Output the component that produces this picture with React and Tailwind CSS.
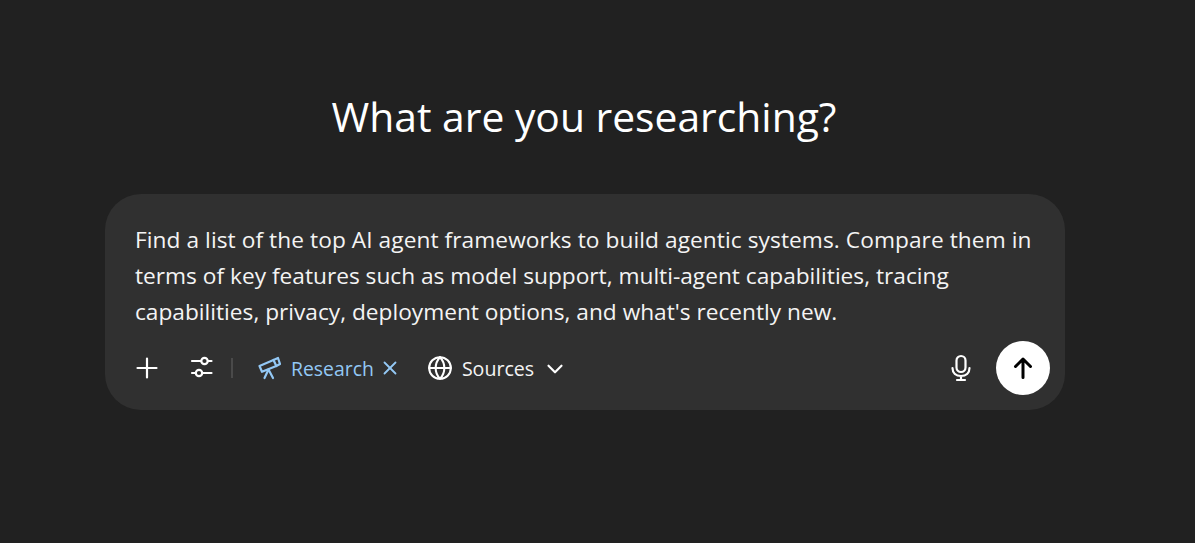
import React from "react";
import { X, Globe, ChevronDown } from "lucide-react";

function PlusIcon() {
  return (
    <svg width="24" height="24" viewBox="0 0 24 24" fill="none" stroke="currentColor" strokeWidth="2.2" strokeLinecap="round">
      <path d="M12 2.5v19M2.5 12h19" />
    </svg>
  );
}

function SlidersIcon() {
  return (
    <svg width="24" height="24" viewBox="0 0 24 24" fill="none" stroke="currentColor" strokeWidth="2.2" strokeLinecap="round" className="ml-[31px]">
      <path d="M2 5h9M18 5h3.5M2 17h3.5M12.5 17h9" />
      <circle cx="14.5" cy="5" r="3.2" />
      <circle cx="9" cy="17" r="3.2" />
    </svg>
  );
}

function TelescopeIcon() {
  return (
    <svg width="24" height="24" viewBox="0 0 24 24" fill="none" stroke="currentColor" strokeWidth="2.2" strokeLinecap="round" strokeLinejoin="round" className="ml-[24px]">
      <path d="M2.5 10L16.5 4l2.8 6L5 15.8z" />
      <path d="M16.5 4L21 2l2 6-3.7 2" />
      <path d="M11.5 13.5l-4 8.5M11.5 13.5l4.5 8.5" />
    </svg>
  );
}

function MicIcon() {
  return (
    <svg width="24" height="28" viewBox="0 0 24 28" fill="none" stroke="currentColor" strokeWidth="2.2" strokeLinecap="round">
      <rect x="7.5" y="2" width="9" height="16" rx="4.5" />
      <path d="M3.5 14c0 5 3.5 8 8.5 8s8.5-3 8.5-8M12 22v4M8 26h8" />
    </svg>
  );
}

function ArrowIcon() {
  return (
    <svg width="24" height="24" viewBox="0 0 24 24" fill="none" stroke="currentColor" strokeWidth="3" strokeLinecap="round" strokeLinejoin="round">
      <path d="M12 21.5V3M4.5 10.5L12 3l7.5 7.5" />
    </svg>
  );
}

export default function App() {
  return (
    <main className="min-h-[543px] bg-[#212121] text-white font-['Open_Sans','Noto_Sans',sans-serif] flex flex-col items-center pt-[89px] pr-[25px] overflow-hidden">
      <h1 className="text-[40.8px] leading-[54px] font-normal text-white -translate-x-[1px]">What are you researching?</h1>

      <div className="mt-[51px] w-[960px] h-[216px] rounded-[36px] bg-[#303030] pt-[28px] pl-[30px] pr-[15px]">
        <p className="text-[22.7px] leading-[36px] text-[#f4f4f4] whitespace-nowrap">
          <span className="tracking-[0.07px]">Find a list of the top AI agent frameworks to build agentic systems. Compare them in</span>
          <br />
          terms of key features such as model support, multi-agent capabilities, tracing
          <br />
          capabilities, privacy, deployment options, and what's recently new.
        </p>

        <div className="mt-[11px] flex items-center">
          <PlusIcon />
          <SlidersIcon />
          <div className="ml-[17px] w-[2px] h-[20px] bg-[#4a4a4a]" />
          <span className="text-[#93c8f5] flex items-center">
            <TelescopeIcon />
            <span className="ml-[10px] mt-[2px] text-[19.4px]">Research</span>
            <X size={22} strokeWidth={2} className="ml-[5px]" />
          </span>
          <Globe size={26} strokeWidth={1.9} className="ml-[26px] text-white" />
          <span className="ml-[9px] mt-[2px] text-[19.6px] text-[#f4f4f4]">Sources</span>
          <ChevronDown size={26} strokeWidth={2} className="ml-[8px] mt-[2px] text-white" />

          <div className="ml-auto flex items-center">
            <MicIcon />
            <button className="ml-[23px] w-[54px] h-[54px] rounded-full bg-white text-black flex items-center justify-center">
              <ArrowIcon />
            </button>
          </div>
        </div>
      </div>
    </main>
  );
}
